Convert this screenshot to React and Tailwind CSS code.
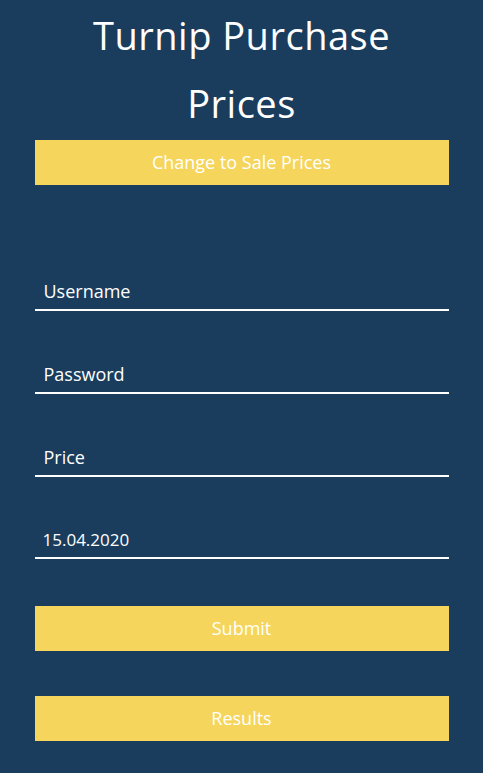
export default function App() {
  const font = { fontFamily: '"Open Sans", "Noto Sans", sans-serif' };
  return (
    <div className="min-h-[773px] w-full bg-[#1a3d5e] text-white" style={font}>
      <div className="mx-auto flex w-[414px] flex-col">
        <h1 className="pt-[1px] text-center text-[38px] font-normal leading-[68px] tracking-[0.5px]">
          Turnip Purchase
          <br />
          Prices
        </h1>
        <button className="mt-[3px] h-[45px] w-full bg-[#f5d55c] text-[18px] text-white">
          Change to Sale Prices
        </button>

        {/* Form fields */}
        <form className="mt-[88px] flex flex-col gap-[45px]">
          <input
            placeholder="Username"
            className="h-[38px] w-full border-b-2 border-white bg-transparent px-[9px] text-[18px] text-white outline-none placeholder:text-white"
          />
          <input
            type="password"
            placeholder="Password"
            className="h-[38px] w-full border-b-2 border-white bg-transparent px-[9px] text-[18px] text-white outline-none placeholder:text-white"
          />
          <input
            placeholder="Price"
            className="h-[38px] w-full border-b-2 border-white bg-transparent px-[9px] text-[18px] text-white outline-none placeholder:text-white"
          />
          <input
            defaultValue="15.04.2020"
            className="-mt-[1px] h-[38px] w-full border-b-2 border-white bg-transparent px-[8px] text-[17px] text-white outline-none"
          />
        </form>

        <button className="mt-[47px] h-[45px] w-full bg-[#f5d55c] text-[18px] text-white">
          Submit
        </button>
        <button className="mt-[45px] h-[45px] w-full bg-[#f5d55c] text-[18px] text-white">
          Results
        </button>
      </div>
    </div>
  );
}
